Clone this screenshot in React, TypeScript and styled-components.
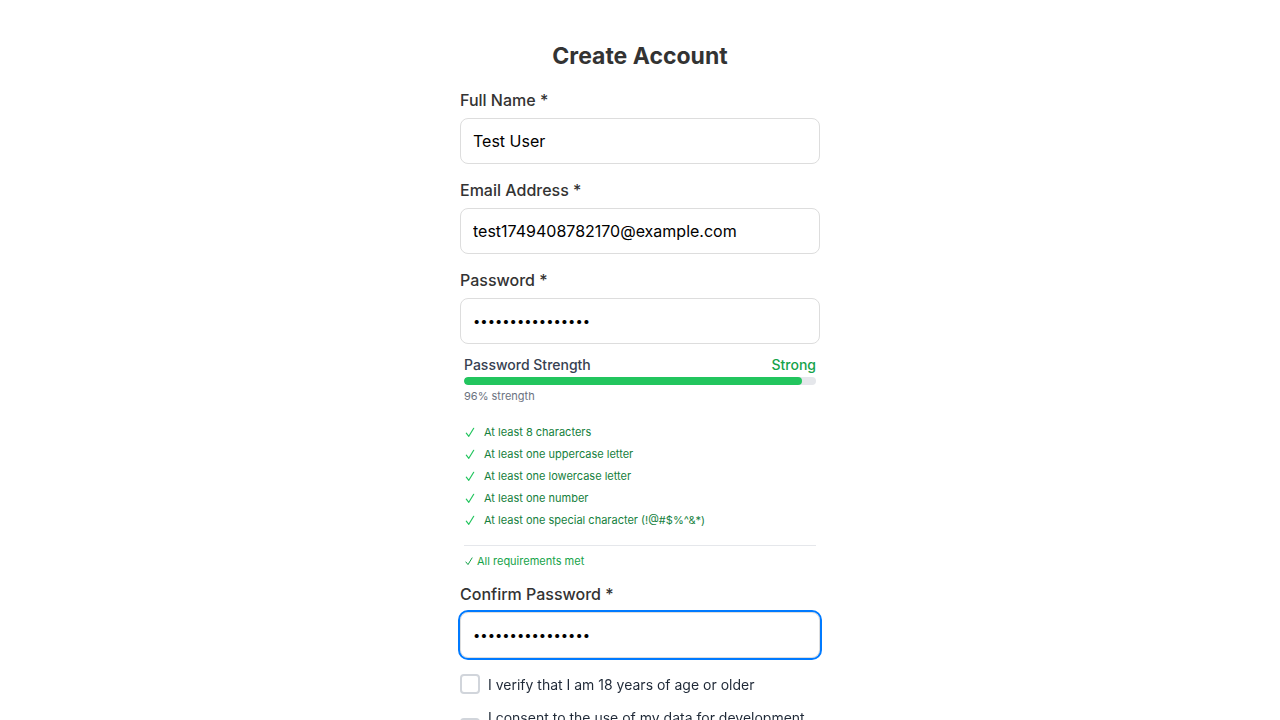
import React from "react";
import styled, { createGlobalStyle } from "styled-components";

const GlobalStyle = createGlobalStyle`
  *, *::before, *::after { box-sizing: border-box; }
  html { scrollbar-width: none; }
  body {
    margin: 0;
    background: #fff;
    color: #333;
    font-family: Inter, "Liberation Sans", sans-serif;
    font-size: 16px;
    line-height: 20px;
    -webkit-font-smoothing: antialiased;
  }
`;

const Page = styled.main`
  display: flex;
  justify-content: center;
  padding: 40px 20px;
`;

const Form = styled.form`
  display: flex;
  flex-direction: column;
  gap: 16px;
  width: 100%;
  max-width: 360px;
`;

const Title = styled.h1`
  margin: 0 0 2px;
  font-size: 23px;
  line-height: 32px;
  font-weight: 700;
  text-align: center;
`;

const Field = styled.div`
  display: flex;
  flex-direction: column;
  gap: 8px;
`;

const Label = styled.label`
  font-weight: 450;
`;

const Input = styled.input`
  width: 100%;
  height: 46px;
  padding: 12px;
  border: 1px solid #ddd;
  border-radius: 8px;
  background: #fff;
  color: #000;
  font: inherit;
  outline: none;
  caret-color: transparent;

  &[type="password"] {
    font-size: 13px;
  }

  &:focus {
    outline: 2px solid #007aff;
    outline-offset: 0;
  }
`;

const Strength = styled.section`
  display: flex;
  flex-direction: column;
  padding: 3px 4px 0;
  font-size: 11px;
  line-height: 16px;
`;

const StrengthHeader = styled.div`
  display: flex;
  justify-content: space-between;
  margin-bottom: 2px;
  color: #374151;
  font-size: 14px;
  line-height: 20px;
  font-weight: 450;
`;

const Rating = styled.span`
  color: #16a34a;
`;

const Track = styled.div`
  height: 8px;
  border-radius: 4px;
  background: #e5e7eb;
  overflow: hidden;
`;

const Bar = styled.div`
  height: 100%;
  border-radius: 4px;
  background: #22c55e;
`;

const Percent = styled.p`
  margin: 3px 0 17px;
  color: #6b7280;
`;

const Requirements = styled.ul`
  display: flex;
  flex-direction: column;
  margin: 0 0 14px;
  padding: 0;
  list-style: none;
`;

const Requirement = styled.li`
  display: flex;
  align-items: center;
  gap: 8px;
  color: #15803d;
  line-height: 22px;
`;

const Check = styled.svg<{ $color: string; $size: number }>`
  flex: none;
  width: ${({ $size }) => $size}px;
  height: ${({ $size }) => $size}px;
  fill: none;
  stroke: ${({ $color }) => $color};
  stroke-linecap: round;
  stroke-linejoin: round;
`;

const Summary = styled.p`
  display: flex;
  align-items: center;
  gap: 3px;
  margin: 0;
  padding-top: 8px;
  border-top: 1px solid #e5e7eb;
  color: #16a34a;
  line-height: 14px;
`;

const Consents = styled.div`
  display: flex;
  flex-direction: column;
  gap: 12px;
`;

const Consent = styled.label`
  display: flex;
  align-items: center;
  gap: 8px;
  color: #1f2937;
  font-size: 14px;
  line-height: 21px;
`;

const Checkbox = styled.input`
  flex: none;
  appearance: none;
  width: 20px;
  height: 20px;
  margin: 0 0 1px;
  border: 2px solid #d1d5db;
  border-radius: 4px;
  background: #fff;

  &:checked {
    border-color: #007aff;
    background: #007aff;
  }
`;

const requirements = [
  "At least 8 characters",
  "At least one uppercase letter",
  "At least one lowercase letter",
  "At least one number",
  "At least one special character (!@#$%^&*)",
];

const strength = 96;

function CheckMark({ color, size }: { color: string; size: number }) {
  return (
    <Check viewBox="0 0 12 12" $color={color} $size={size} aria-hidden="true">
      <path d="M2.3 7.2 L4.8 10.3 L9.7 2.3" strokeWidth="1.2" />
    </Check>
  );
}

export default function App() {
  return (
    <>
      <GlobalStyle />
      <Page>
        <Form>
          <Title>Create Account</Title>
          <Field>
            <Label htmlFor="name">Full Name *</Label>
            <Input id="name" type="text" defaultValue="Test User" />
          </Field>
          <Field>
            <Label htmlFor="email">Email Address *</Label>
            <Input id="email" type="email" defaultValue="test1749408782170@example.com" />
          </Field>
          <Field>
            <Label htmlFor="password">Password *</Label>
            <Input id="password" type="password" defaultValue="TestPassword123!" />
            <Strength>
              <StrengthHeader>
                <span>Password Strength</span>
                <Rating>Strong</Rating>
              </StrengthHeader>
              <Track>
                <Bar style={{ width: `${strength}%` }} />
              </Track>
              <Percent>{strength}% strength</Percent>
              <Requirements>
                {requirements.map((text) => (
                  <Requirement key={text}>
                    <CheckMark color="#22c55e" size={12} />
                    {text}
                  </Requirement>
                ))}
              </Requirements>
              <Summary>
                <CheckMark color="#16a34a" size={10} />
                All requirements met
              </Summary>
            </Strength>
          </Field>
          <Field>
            <Label htmlFor="confirm">Confirm Password *</Label>
            <Input id="confirm" type="password" defaultValue="TestPassword123!" autoFocus />
          </Field>
          <Consents>
            <Consent>
              <Checkbox type="checkbox" />
              <span>I verify that I am 18 years of age or older</span>
            </Consent>
            <Consent>
              <Checkbox type="checkbox" />
              <span>I consent to the use of my data for development purposes</span>
            </Consent>
          </Consents>
        </Form>
      </Page>
    </>
  );
}
